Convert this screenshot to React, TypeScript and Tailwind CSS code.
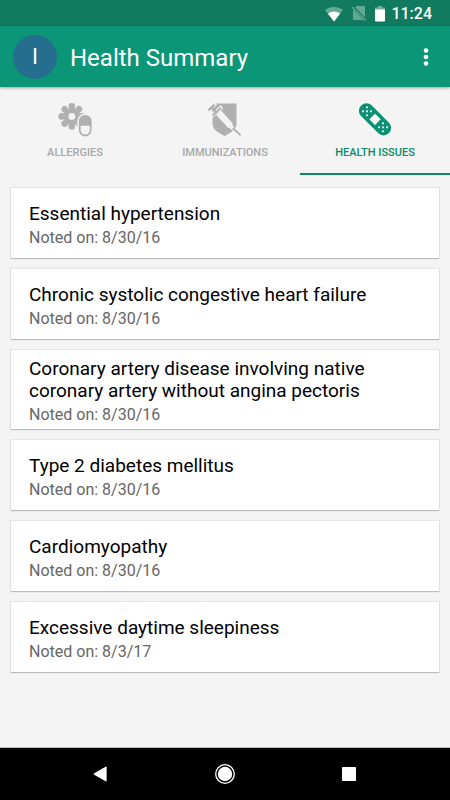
import React from 'react';

type TabId = 'allergies' | 'immunizations' | 'issues';

interface HealthIssue {
  name: string;
  noted: string;
}

const issues: HealthIssue[] = [
  { name: 'Essential hypertension', noted: '8/30/16' },
  { name: 'Chronic systolic congestive heart failure', noted: '8/30/16' },
  { name: 'Coronary artery disease involving native coronary artery without angina pectoris', noted: '8/30/16' },
  { name: 'Type 2 diabetes mellitus', noted: '8/30/16' },
  { name: 'Cardiomyopathy', noted: '8/30/16' },
  { name: 'Excessive daytime sleepiness', noted: '8/3/17' },
];

const AllergyIcon = () => (
  <svg width="34" height="36" viewBox="0 0 34 36" aria-hidden="true">
    <g fill="#b0b0b0">
      <circle cx="13.8" cy="14.4" r="8.6" />
      {[0, 45, 90, 135, 180, 225, 270, 315].map((angle) => (
        <circle key={angle} cx="13.8" cy="4.3" r="3.3" transform={`rotate(${angle} 13.8 14.4)`} />
      ))}
    </g>
    <circle cx="13.8" cy="14.4" r="3.4" fill="#f4f4f4" />
    <rect x="19.3" y="11.5" width="15.8" height="24.5" rx="7.9" fill="#f4f4f4" />
    <rect x="20.8" y="13" width="12.8" height="21.4" rx="6.4" fill="#b0b0b0" />
    <path d="M22.6 23.8h9.2v4.2a4.6 4.6 0 0 1-9.2 0z" fill="#f4f4f4" />
  </svg>
);

const ImmunizationIcon = () => (
  <svg width="34" height="36" viewBox="0 0 34 36" aria-hidden="true">
    <path d="M4.5 1.4h24v20.2c0 6.2-6 9.4-12 12.4-6-3-12-6.2-12-12.4z" fill="#b0b0b0" />
    {/* plunger, barrel and needle are cut out of the shield first */}
    <g stroke="#f4f4f4" fill="none">
      <path d="M-1 9.5 7.5 1.2" strokeWidth="4.2" />
      <path d="M3.6 14 14 4.6" strokeWidth="3.8" />
      <path d="M10.5 10.5 22.8 24.2" strokeWidth="6.4" strokeLinejoin="round" />
      <path d="M22 23.5 24.5 26.2" strokeWidth="4" strokeLinecap="round" />
    </g>
    <g stroke="#b0b0b0" fill="none">
      <path d="M.5 8.4 6.4 2.6M3.6 5.6 9 10.6" strokeWidth="2.2" />
      <path d="M4.6 13.4 13 5.7" strokeWidth="2" />
      <path d="M24.8 26 32.6 33.4" strokeWidth="1.9" />
    </g>
  </svg>
);

const upperDots = [[9, 5.3], [5, 9.3], [9, 9.3], [13, 9.3], [9, 13.3]];

const BandageIcon = () => (
  <svg width="34" height="36" viewBox="0 0 34 36" aria-hidden="true">
    <rect x="-2.5" y="9.8" width="39" height="15" rx="7.2" fill="#0c9272" transform="rotate(45 17 17.3)" />
    <rect x="13" y="13.3" width="8" height="8" fill="#fff" transform="rotate(45 17 17.3)" />
    <g fill="#fff">
      {upperDots.map(([x, y]) => (
        <React.Fragment key={`${x}-${y}`}>
          <rect x={x - 0.9} y={y - 0.9} width="1.8" height="1.8" />
          <rect x={x + 15.1} y={y + 15.1} width="1.8" height="1.8" />
        </React.Fragment>
      ))}
    </g>
  </svg>
);

const tabs: { id: TabId; label: string; icon: React.ReactNode }[] = [
  { id: 'allergies', label: 'ALLERGIES', icon: <AllergyIcon /> },
  { id: 'immunizations', label: 'IMMUNIZATIONS', icon: <ImmunizationIcon /> },
  { id: 'issues', label: 'HEALTH ISSUES', icon: <BandageIcon /> },
];

const StatusBar = () => (
  <div className="flex h-[26px] items-center justify-end bg-[#127a5f] pt-[2px] pr-[18px] text-white">
    <svg className="mr-2" width="18" height="16" viewBox="0 0 18 16" aria-hidden="true">
      <path d="M9 15.5 0 4C5 0 13 0 18 4z" fill="#fff" opacity=".35" />
      <path d="M9 15.5 3 7.7c3.5-2.9 8.5-2.9 12 0z" fill="#fff" />
    </svg>
    <svg className="mr-2" width="16" height="16" viewBox="0 0 16 16" aria-hidden="true">
      <path d="M5.5 0H13q1 0 1 1v10.5L4.2 1.5zM2 3.5 12.5 14H3q-1 0-1-1z" fill="#fff" opacity=".35" />
      <path d="M1 1 14.5 14.5" stroke="#fff" opacity=".35" strokeWidth="1.2" />
    </svg>
    <svg className="mr-1.5" width="10" height="16" viewBox="0 0 10 16" aria-hidden="true">
      <path d="M3 0h4v1.5h3V4H0V1.5h3z" fill="#fff" opacity=".4" />
      <path d="M0 3.5h10V14.5q0 1-1 1H1q-1 0-1-1z" fill="#fff" />
    </svg>
    <span className="text-base font-medium">11:24</span>
  </div>
);

const IssueCard: React.FC<{ issue: HealthIssue }> = ({ issue }) => (
  <li className="flex min-h-[70px] flex-col justify-center bg-white px-[18px] pt-2 pb-[5px] shadow-[0_0_1px_1px_rgba(0,0,0,0.06),0_1px_1px_rgba(0,0,0,0.18)]">
    <h2 className="text-[19px] leading-[22px] text-black">{issue.name}</h2>
    <p className="mt-1 text-base leading-[18px] text-[#666]">Noted on: {issue.noted}</p>
  </li>
);

export default function App() {
  const [active, setActive] = React.useState<TabId>('issues');

  return (
    <div className="flex min-h-screen flex-col bg-[#f4f4f4] font-['Roboto',sans-serif]">
      <StatusBar />

      <header className="z-10 flex h-[61px] items-center bg-[#0c9678] pl-[13px] pr-3 text-white shadow-[0_1px_3px_rgba(0,0,0,0.35)]">
        <div className="flex size-11 items-center justify-center rounded-full bg-[#256e8f] text-[22px]">I</div>
        <h1 className="ml-[13px] flex-1 pt-[3px] text-2xl">Health Summary</h1>
        <button type="button" aria-label="More options" className="flex h-10 w-6 items-center justify-center">
          <svg width="6" height="20" viewBox="0 0 6 20" fill="#fff" aria-hidden="true">
            <circle cx="3" cy="3.5" r="2.3" />
            <circle cx="3" cy="10" r="2.3" />
            <circle cx="3" cy="16.5" r="2.3" />
          </svg>
        </button>
      </header>

      <nav className="grid grid-cols-3">
        {tabs.map((tab) => (
          <button
            key={tab.id}
            type="button"
            onClick={() => setActive(tab.id)}
            className={`flex h-[88px] flex-col items-center border-b-2 pt-[15px] text-[11px] leading-4 font-medium ${
              active === tab.id ? 'border-[#0c8a68] text-[#0c8a68]' : 'border-transparent text-[#a8a8a8]'
            }`}
          >
            {tab.icon}
            <span className="mt-[7px]">{tab.label}</span>
          </button>
        ))}
      </nav>

      <main className="flex-1 px-[11px] pt-[13px] pb-4">
        <ul className="flex flex-col gap-[11px]">
          {issues.map((issue) => (
            <IssueCard key={issue.name} issue={issue} />
          ))}
        </ul>
      </main>

      <footer className="flex h-[53px] items-center justify-between border-t border-[#bbb] bg-black px-[90px]">
        <button type="button" aria-label="Back">
          <svg width="20" height="20" viewBox="0 0 20 20" fill="#fff" aria-hidden="true">
            <path d="M4.2 9.3 15.6 2.7q1-.5 1 .6v13.4q0 1.1-1 .6L4.2 10.7q-1-.7 0-1.4z" />
          </svg>
        </button>
        <button type="button" aria-label="Home">
          <svg width="20" height="20" viewBox="0 0 20 20" aria-hidden="true">
            <circle cx="10" cy="10" r="9.3" fill="none" stroke="#fff" strokeWidth="1.3" />
            <circle cx="10" cy="10" r="7.2" fill="#fff" />
          </svg>
        </button>
        <button type="button" aria-label="Recent apps">
          <svg width="20" height="20" viewBox="0 0 20 20" aria-hidden="true">
            <rect x="2" y="3" width="14" height="14" rx="0.8" fill="#fff" />
          </svg>
        </button>
      </footer>
    </div>
  );
}
